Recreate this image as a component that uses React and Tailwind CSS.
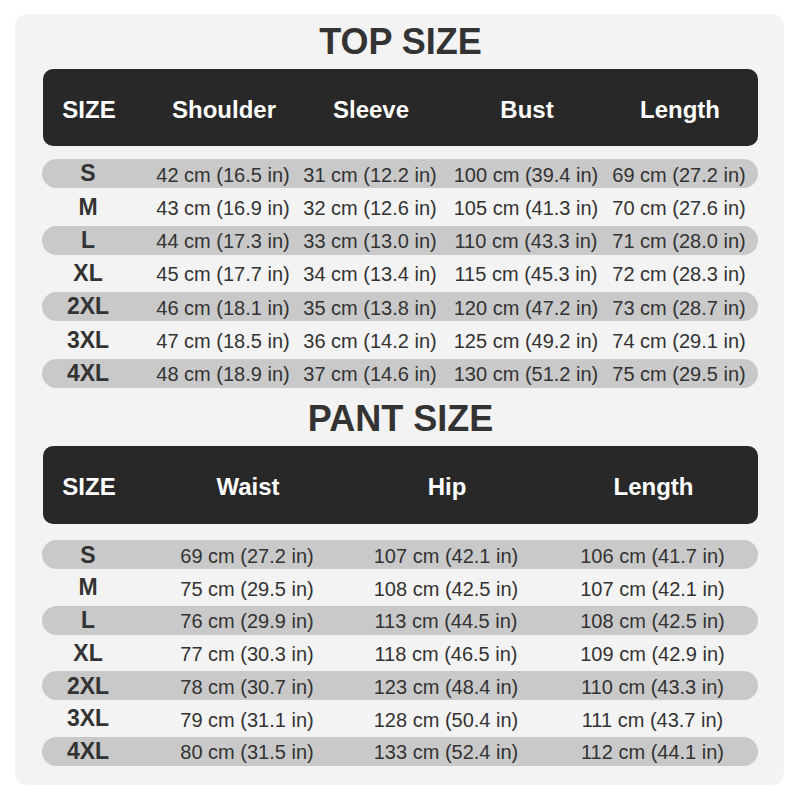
import React from "react";

const topCols = [
  { w: "w-[92px]", pad: "" },
  { w: "w-[176px]", pad: "pl-[2px]" },
  { w: "w-[140px]", pad: "pr-[20px]" },
  { w: "w-[160px]", pad: "pr-[8px]" },
  { w: "w-[147px]", pad: "pr-[9px]" },
];

const pantCols = [
  { w: "w-[92px]", pad: "" },
  { w: "w-[226px]", pad: "" },
  { w: "w-[172px]", pad: "" },
  { w: "w-[225px]", pad: "pl-[16px]" },
];

const topHead = ["SIZE", "Shoulder", "Sleeve", "Bust", "Length"];
const topRows = [
  ["S", "42 cm (16.5 in)", "31 cm (12.2 in)", "100 cm (39.4 in)", "69 cm (27.2 in)"],
  ["M", "43 cm (16.9 in)", "32 cm (12.6 in)", "105 cm (41.3 in)", "70 cm (27.6 in)"],
  ["L", "44 cm (17.3 in)", "33 cm (13.0 in)", "110 cm (43.3 in)", "71 cm (28.0 in)"],
  ["XL", "45 cm (17.7 in)", "34 cm (13.4 in)", "115 cm (45.3 in)", "72 cm (28.3 in)"],
  ["2XL", "46 cm (18.1 in)", "35 cm (13.8 in)", "120 cm (47.2 in)", "73 cm (28.7 in)"],
  ["3XL", "47 cm (18.5 in)", "36 cm (14.2 in)", "125 cm (49.2 in)", "74 cm (29.1 in)"],
  ["4XL", "48 cm (18.9 in)", "37 cm (14.6 in)", "130 cm (51.2 in)", "75 cm (29.5 in)"],
];

const pantHead = ["SIZE", "Waist", "Hip", "Length"];
const pantRows = [
  ["S", "69 cm (27.2 in)", "107 cm (42.1 in)", "106 cm (41.7 in)"],
  ["M", "75 cm (29.5 in)", "108 cm (42.5 in)", "107 cm (42.1 in)"],
  ["L", "76 cm (29.9 in)", "113 cm (44.5 in)", "108 cm (42.5 in)"],
  ["XL", "77 cm (30.3 in)", "118 cm (46.5 in)", "109 cm (42.9 in)"],
  ["2XL", "78 cm (30.7 in)", "123 cm (48.4 in)", "110 cm (43.3 in)"],
  ["3XL", "79 cm (31.1 in)", "128 cm (50.4 in)", "111 cm (43.7 in)"],
  ["4XL", "80 cm (31.5 in)", "133 cm (52.4 in)", "112 cm (44.1 in)"],
];

const Table = ({ title, cols, head, rows, headH, rowGap, headPt, gapTop }) => {
  return (
    <section className="flex flex-col">
      <h2 className="text-center text-[36px] leading-[36px] font-bold text-[#333333]">{title}</h2>
      <div
        className={`mt-[9px] flex items-center rounded-[10px] bg-[#282828] text-white text-[24px] font-bold ${headH} ${headPt}`}
      >
        {head.map((h, i) => (
          <div key={h} className={`flex justify-center whitespace-nowrap ${cols[i].w} ${cols[i].pad}`}>
            {h}
          </div>
        ))}
      </div>
      <div className={`flex flex-col ${gapTop} ${rowGap}`}>
        {rows.map((r, ri) => (
          <div
            key={r[0]}
            className={`flex items-center h-[29px] rounded-full -ml-px ${ri % 2 === 0 ? "bg-[#c9c9c9]" : ""}`}
          >
            {r.map((c, i) => (
              <div
                key={i}
                className={`flex justify-center whitespace-nowrap text-[#333333] ${cols[i].w} ${cols[i].pad} ${
                  i === 0 ? "text-[23px] font-bold" : "text-[20px] pt-[2px]"
                }`}
              >
                {c}
              </div>
            ))}
          </div>
        ))}
      </div>
    </section>
  );
};

export default function App() {
  return (
    <div className="w-[800px] h-[800px] bg-white pt-[14px] pl-[15px] font-['Liberation_Sans',Arial,sans-serif]">
      <div className="w-[769px] h-[771px] rounded-[12px] bg-[#f3f3f3] pt-[10px] pl-[28px]">
        <div className="w-[715px] flex flex-col gap-[13.5px]">
          <Table
            title="TOP SIZE"
            cols={topCols}
            head={topHead}
            rows={topRows}
            headH="h-[77px]"
            headPt="pt-[5px]"
            gapTop="mt-[13px]"
            rowGap="gap-[4.3px]"
          />
          <Table
            title="PANT SIZE"
            cols={pantCols}
            head={pantHead}
            rows={pantRows}
            headH="h-[78px]"
            headPt="pt-[4px]"
            gapTop="mt-[16px]"
            rowGap="gap-[3.75px]"
          />
        </div>
      </div>
    </div>
  );
}
